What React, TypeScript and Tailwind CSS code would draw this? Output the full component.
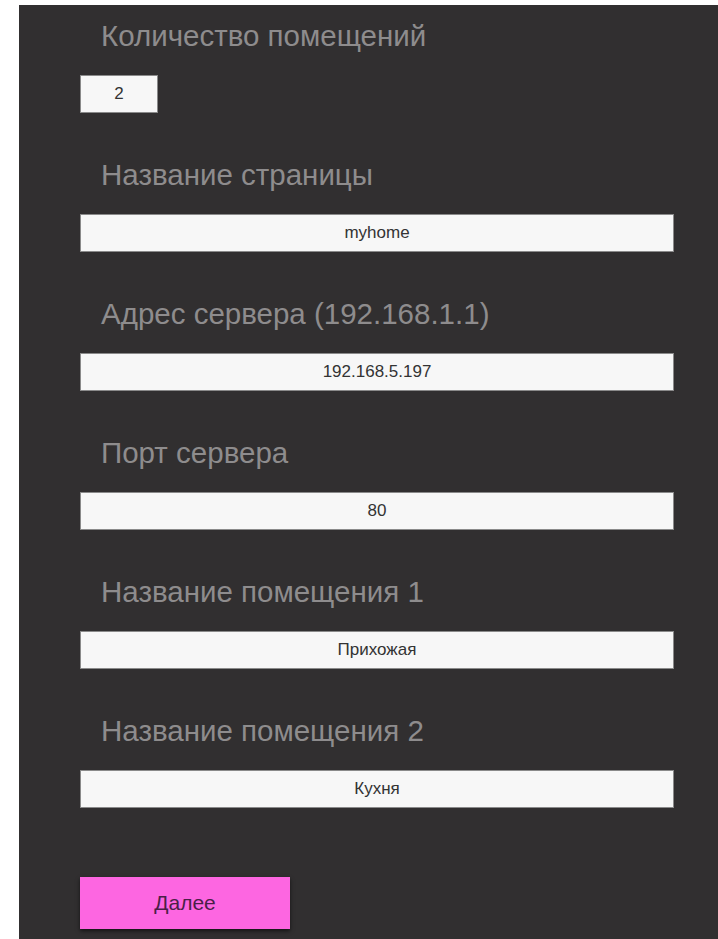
const fields = [
  { label: "Название страницы", value: "myhome" },
  { label: "Адрес сервера (192.168.1.1)", value: "192.168.5.197" },
  { label: "Порт сервера", value: "80" },
  { label: "Название помещения 1", value: "Прихожая" },
  { label: "Название помещения 2", value: "Кухня" },
];

function Label({ children }: { children: string }) {
  return (
    <div className="ml-[21px] mb-[22px] text-[29.5px] leading-[34px] text-[#8e8c8d] font-['Liberation_Sans',Arial,sans-serif]">
      {children}
    </div>
  );
}

const inputCls =
  "block h-[38px] border border-[#8a8a8a] bg-[#f7f7f7] text-center text-[17px] text-[#333] font-['Liberation_Sans',Arial,sans-serif] outline-none";

export default function App() {
  return (
    <div className="bg-white pl-[19px] pt-[5px]">
      <div className="min-h-[934px] bg-[#312f30] pl-[61px] pt-[14px] pb-[10px]">
        <Label>Количество помещений</Label>
        <input className={`${inputCls} w-[78px]`} defaultValue="2" readOnly />

        {fields.map((f) => (
          <div key={f.label} className="mt-[45px]">
            <Label>{f.label}</Label>
            <input className={`${inputCls} w-[594px]`} defaultValue={f.value} readOnly />
          </div>
        ))}

        <button className="mt-[69px] h-[52px] w-[210px] bg-[#fd66e1] text-[21px] text-[#4b1f47] font-['Liberation_Sans',Arial,sans-serif] shadow-[0_2px_4px_rgba(0,0,0,0.6)]">
          Далее
        </button>
      </div>
    </div>
  );
}
